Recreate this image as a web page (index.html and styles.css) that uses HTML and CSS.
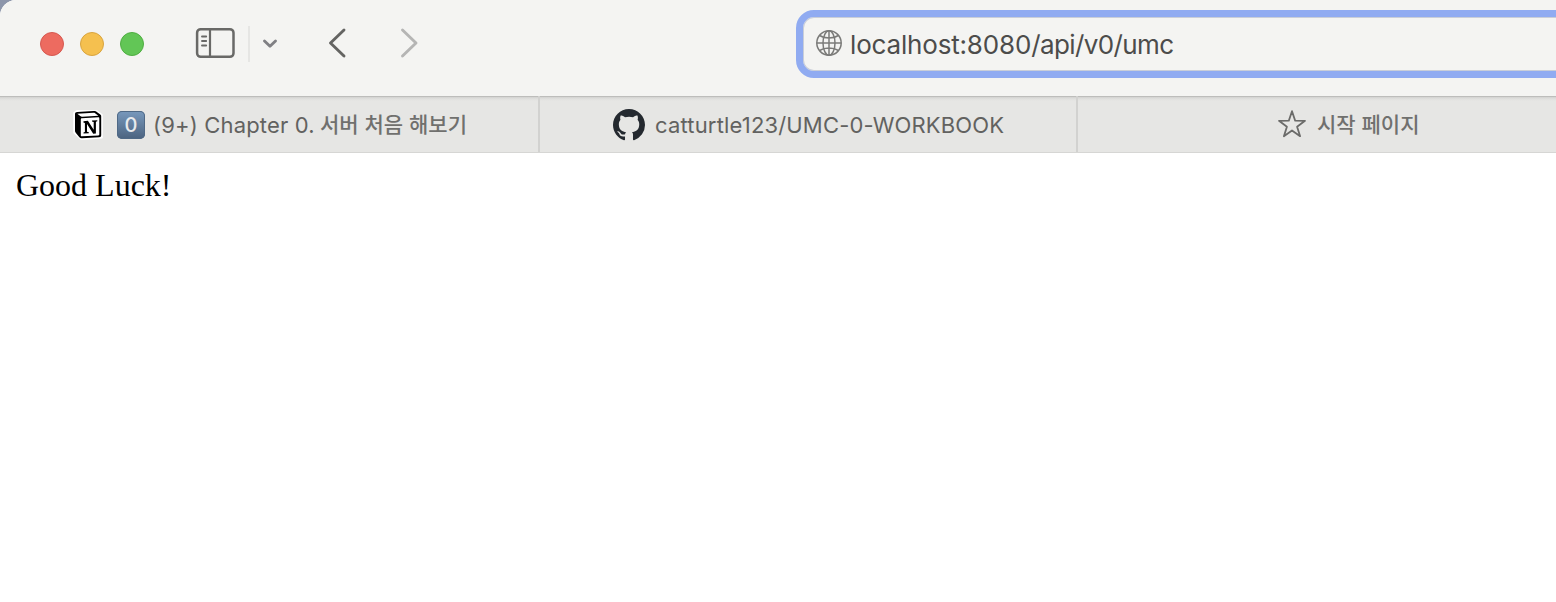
FILE: index.html
```html
<!DOCTYPE html>
<html lang="ko">
<head>
<meta charset="utf-8">
<title>localhost:8080/api/v0/umc</title>
<link rel="stylesheet" href="styles.css">
</head>
<body>
<div class="window">
  <header class="toolbar">
    <div class="lights">
      <span class="light red"></span>
      <span class="light yellow"></span>
      <span class="light green"></span>
    </div>
    <svg class="sidebar-icon" width="40" height="32" viewBox="0 0 40 32" fill="none" stroke="#696967">
      <rect x="2.100" y="2.200" width="36.400" height="27.600" rx="3.600" stroke-width="2.500"/>
      <path d="M15 2v28" stroke-width="2.200"/>
      <path d="M7 9.500h4.200M7 14h4.200M7 18.500h4.200" stroke-width="1.900" stroke-linecap="round"/>
    </svg>
    <span class="divider"></span>
    <svg class="menu-icon" width="16" height="12" viewBox="0 0 16 12" fill="none" stroke="#808084" stroke-width="2.900" stroke-linecap="round" stroke-linejoin="round"><path d="M2.500 4l5.500 5.200L13.500 4"/></svg>
    <svg class="back-icon" width="20" height="32" viewBox="0 0 20 32" fill="none" stroke="#646462" stroke-width="2.900" stroke-linecap="round" stroke-linejoin="round"><path d="M17 3L3.500 16 17 29"/></svg>
    <svg class="forward-icon" width="20" height="32" viewBox="0 0 20 32" fill="none" stroke="#b5b5b4" stroke-width="2.900" stroke-linecap="round" stroke-linejoin="round"><path d="M2.500 3L16 16 2.500 29"/></svg>
    <div class="address">
      <svg class="globe" width="28" height="28" viewBox="0 0 28 28" fill="none" stroke="#7b7b79" stroke-width="1.500">
        <circle cx="14" cy="14" r="12.200"/>
        <ellipse cx="14" cy="14" rx="6" ry="12.200"/>
        <path d="M14 1.800v24.400M1.800 14h24.400M4.600 6.500c5 3.200 13.800 3.200 18.800 0M4.600 21.500c5-3.200 13.800-3.200 18.800 0"/>
      </svg>
      <span class="url"><span class="host">localhost:8080</span>/api/v0/umc</span>
    </div>
  </header>
  <nav class="tabs">
    <div class="tab tab-notion">
      <svg class="notion" width="30" height="30" viewBox="0 0 30 30">
        <path d="M3.500 1.200L22.500.2 28.800 5v22.500L8.500 29.200 1.200 22.500V3z" fill="#fff" stroke="#fff" stroke-width="2" stroke-linejoin="round"/>
        <path d="M2 4.300C2 2.800 2.800 2.200 4.300 2.100L20.500 1c1.500-.1 2.300.1 3.300.9l3.500 2.700c.7.6.9 1 .9 2v18.300c0 1.500-.6 2.200-2.100 2.300L9 28.300c-1.200.1-1.900-.2-2.600-1L2.900 23C2.200 22.100 2 21.500 2 20.600z"/>
        <path d="M4.300 3.700l3.300 2.600c.5.400.9.500 1.800.4l16-1-3.300-2.400c-.5-.4-.9-.5-1.600-.5z" fill="#fff"/>
        <path d="M7.800 9.500c0-.8.300-1.100 1-1.200l16.500-1c.7 0 1 .3 1 1v16c0 .8-.3 1-1 1.100L9 26.300c-.8 0-1.200-.2-1.200-1.100z" fill="#fff"/>
        <path d="M10.500 11.200l4.400-.4 5.800 8.900v-7.800l-1.700-.3v-1.100l5.300-.3v1.100l-1.400.5v11.700l-2.700.2-6.200-9.600v7.700l1.800.5v1l-5.300.3v-1.100l1.400-.5V12.900l-1.500-.4z"/>
      </svg>
      <span class="keycap">0</span>
      <span class="title latin-one">(9+) Chapter 0.</span>
      <span class="title korean korean-one">서버 처음 해보기</span>
    </div>
    <div class="tab tab-github">
      <svg class="github" width="32" height="32" viewBox="0 0 16 16" fill="#24292f"><path d="M8 0C3.580 0 0 3.580 0 8c0 3.540 2.290 6.530 5.470 7.590.4.070.55-.17.55-.38 0-.19-.01-.82-.01-1.490-2.010.37-2.530-.49-2.690-.94-.09-.23-.48-.94-.82-1.130-.28-.15-.68-.52-.01-.53.63-.01 1.080.58 1.230.82.72 1.210 1.870.87 2.330.66.070-.52.28-.87.51-1.070-1.780-.2-3.640-.89-3.640-3.950 0-.87.31-1.590.82-2.150-.08-.2-.36-1.020.08-2.120 0 0 .67-.21 2.200.82.64-.18 1.320-.27 2-.27s1.360.09 2 .27c1.530-1.040 2.200-.82 2.200-.82.44 1.100.16 1.920.08 2.120.51.56.82 1.270.82 2.150 0 3.070-1.870 3.750-3.650 3.950.29.25.54.73.54 1.480 0 1.070-.01 1.930-.01 2.200 0 .21.15.46.55.38A8.010 8.010 0 0 0 16 8c0-4.420-3.580-8-8-8z"/></svg>
      <span class="title latin-two">catturtle123/UMC-0-WORKBOOK</span>
    </div>
    <div class="tab tab-start">
      <svg class="star" width="30" height="30" viewBox="0 0 30 30" fill="none" stroke="#6b6b69" stroke-width="1.800" stroke-linejoin="round"><path d="M15 2.200L18.200 11.700L28 11.800L20.100 17.700L23.100 27.200L15 21.500L6.900 27.200L9.900 17.700L2 11.800L11.800 11.700Z"/></svg>
      <span class="title korean korean-two">시작 페이지</span>
    </div>
  </nav>
  <main class="page">Good Luck!</main>
</div>
</body>
</html>
```

FILE: styles.css
```css
* { box-sizing: border-box; }
body { margin: 0; background: #8d96ab; overflow: hidden; }
.window {
  height: 602px;
  display: flex;
  flex-direction: column;
  overflow: hidden;
  background: #fff;
  border-top-left-radius: 16px;
}
.toolbar {
  height: 96px;
  flex: none;
  display: flex;
  align-items: flex-start;
  background: #f4f4f2;
}
.lights { display: flex; gap: 16px; padding: 32px 0 0 40px; }
.light { width: 24px; height: 24px; border-radius: 50%; border: 1px solid; }
.red { background: #ed6b60; border-color: #d65850; }
.yellow { background: #f5c04f; border-color: #d9a43f; }
.green { background: #62c656; border-color: #4fae42; }
.sidebar-icon { margin: 27px 0 0 51px; flex: none; }
.divider { width: 2px; height: 36px; margin: 26px 0 0 13px; background: #e6e6e4; flex: none; }
.menu-icon { margin: 37px 0 0 12px; flex: none; }
.back-icon { margin: 27px 0 0 49px; flex: none; }
.forward-icon { margin: 27px 0 0 53px; flex: none; }
.address {
  flex: none;
  width: 800px;
  height: 68px;
  margin: 10px 0 0 376px;
  display: flex;
  align-items: flex-start;
  border: 7px solid #90abf1;
  border-radius: 18px;
  box-shadow: inset 0 0 0 1px #c9ced8;
}
.globe { margin: 12px 0 0 12px; flex: none; }
.url {
  margin: 12px 0 0 7px;
  font: 26px/32px Inter, sans-serif;
  letter-spacing: -0.600px;
  color: #4c4c4b;
  white-space: nowrap;
}
.host { letter-spacing: -0.170px; }
.tabs {
  height: 57px;
  width: 1618px;
  flex: none;
  display: flex;
  background: linear-gradient(#bdbdbb 0 1px, #d2d2d0 1px, #e0e0de 3px, #e6e6e4 5px);
  border-bottom: 1px solid #d6d6d4;
}
.tab { display: flex; align-items: flex-start; flex: none; width: 538px; }
.tab-notion { width: 540px; padding-left: 73px; border-right: 2px solid #d2d2d0; }
.tab-github { padding-left: 73px; border-right: 2px solid #d2d2d0; }
.tab-start { padding-left: 199px; }
.notion { margin-top: 14px; flex: none; }
.keycap {
  width: 28px;
  height: 28px;
  margin: 15px 0 0 14px;
  border-radius: 5px;
  background: linear-gradient(#7899bd, #4b637f);
  box-shadow: inset 0 0 0 1px #4f6986;
  font: 500 20px/28px Inter, sans-serif;
  text-align: center;
  color: #e8eaec;
  flex: none;
}
.title {
  margin-top: 14px;
  font: 400 22px/30px Inter, sans-serif;
  letter-spacing: 0.170px;
  color: #626260;
  white-space: nowrap;
}
.korean { margin-top: 12px; font: 500 21px/30px "Noto Sans CJK KR", sans-serif; letter-spacing: 0; color: #70706e; }
.latin-one { width: 159px; margin-left: 8px; }
.korean-one { margin-left: 8px; }
.github { margin-top: 13px; flex: none; }
.latin-two { margin-left: 10px; }
.star { margin-top: 13px; flex: none; }
.korean-two { margin-left: 10px; }
.page { padding: 14px 16px; font: 32px/36px "Liberation Serif", serif; color: #000; }
```
